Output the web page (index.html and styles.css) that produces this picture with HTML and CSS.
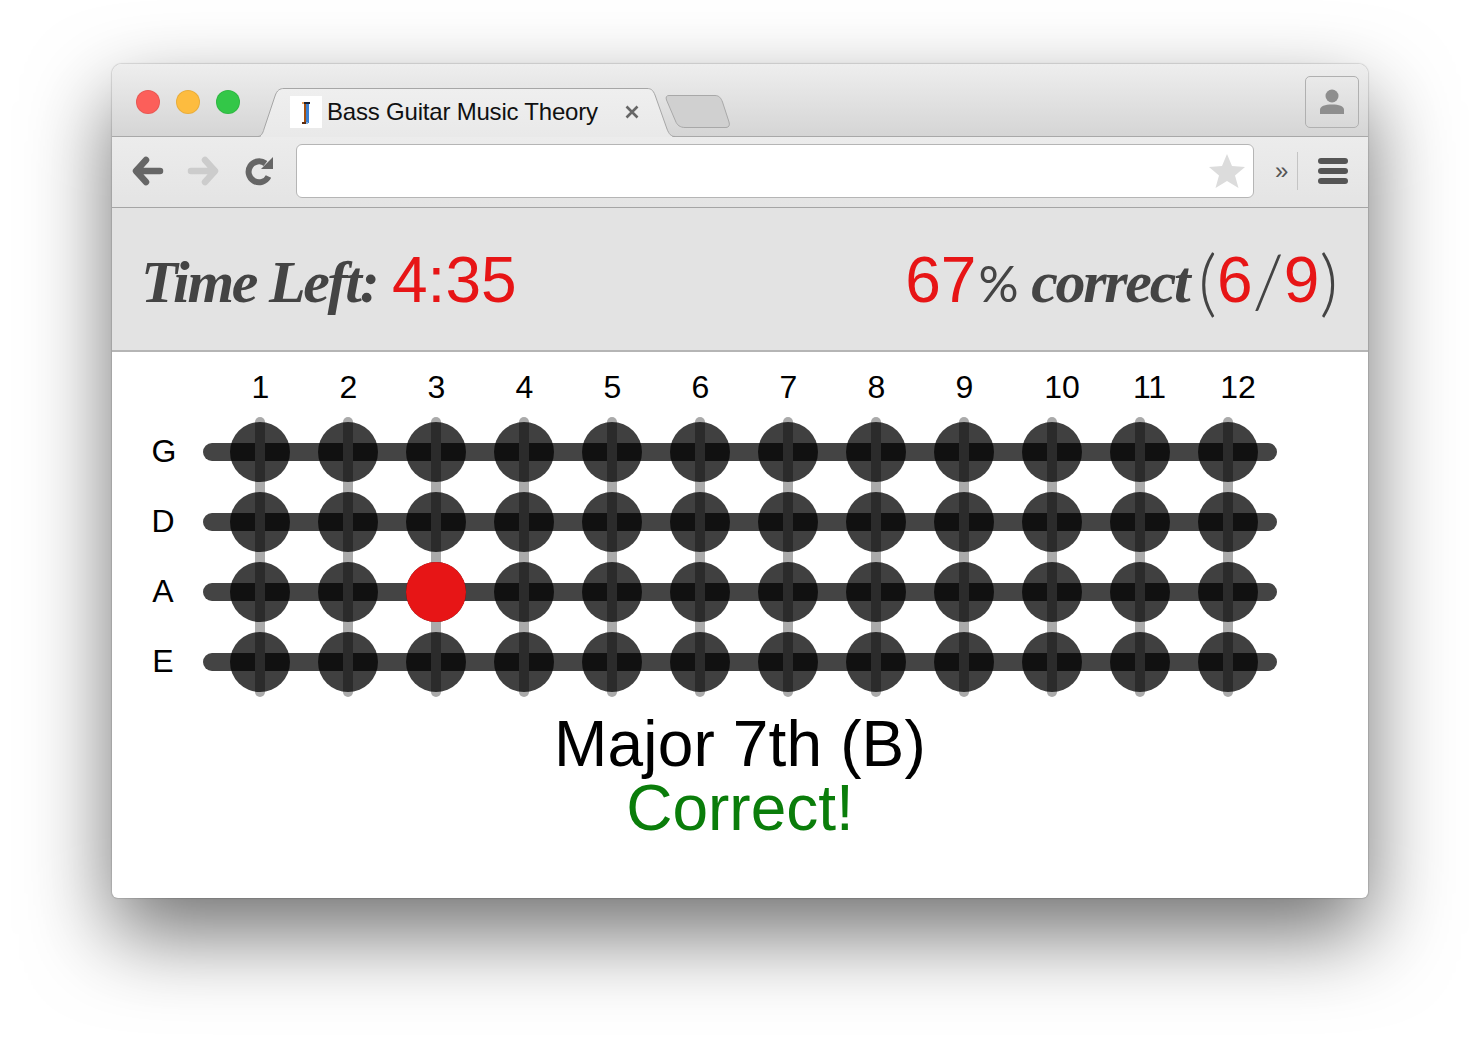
FILE: index.html
```html
<!DOCTYPE html>
<html lang="en">
  <head>
    <meta charset="UTF-8" />
    <title>Bass Guitar Music Theory</title>
    <link rel="stylesheet" href="styles.css">
  </head>
  <body>
    <div class="window">
      <div class="tabstrip">
        <div class="lights">
          <span class="light red"></span>
          <span class="light yellow"></span>
          <span class="light green"></span>
        </div>
        <div class="tab">
          <svg class="tab-shape" width="418" height="49" viewBox="0 0 418 49">
            <defs>
              <linearGradient id="tabFill" x1="0" y1="0" x2="0" y2="1">
                <stop offset="0" stop-color="#efefef" />
                <stop offset="1" stop-color="#e9e9e9" />
              </linearGradient>
            </defs>
            <path fill="url(#tabFill)" stroke="#a6a6a6" d="M0 48.5C3 48.500 5 45 6 41L17 8C19 2 22 .5 26 .5H389C393 .5 395 2 397 7L409 41C411 46 413 48.500 417 48.500" />
            <rect x="3" y="48" width="411" height="1" fill="#e9e9e9" />
          </svg>
          <svg class="favicon" width="32" height="32" viewBox="0 0 32 32">
            <rect width="32" height="32" fill="#fff" />
            <rect x="14" y="8" width="2" height="19" fill="#a5500f" />
            <rect x="16" y="8" width="3" height="19" fill="#3b7fd0" />
            <rect x="12" y="6" width="2" height="2" fill="#e8a060" />
            <rect x="14" y="6" width="6" height="2" fill="#1b2030" />
            <rect x="12" y="26" width="4" height="2" fill="#5a2a10" />
            <rect x="16" y="26" width="2" height="2" fill="#7fb0e0" />
          </svg>
          <span class="tab-title">Bass Guitar Music Theory</span>
          <svg class="tab-close" width="14" height="14" viewBox="0 0 14 14">
            <path d="M1.500 1.500L12.500 12.500M12.500 1.500L1.500 12.500" stroke="#666" stroke-width="2.6" />
          </svg>
        </div>
        <svg class="new-tab" width="66" height="33" viewBox="0 0 66 33">
          <path fill="#d0d0d0" stroke="#a8a8a8" d="M4 .5H50C54 .5 56 3 57.500 7L64 27C65 30 64 32.500 61 32.500H20C15 32.500 12 30 10.500 26L1.500 5C.5 2 1.500 .5 4 .5Z" />
        </svg>
        <div class="profile">
          <svg width="26" height="26" viewBox="0 0 26 26">
            <circle cx="13" cy="7" r="6.500" fill="#8e8e8e" />
            <path d="M1 25V21C1 17 6 15.500 13 15.500S25 17 25 21V25Z" fill="#8e8e8e" />
          </svg>
        </div>
      </div>

      <div class="toolbar">
        <svg class="nav-icon" width="32" height="32" viewBox="0 0 32 32">
          <path d="M14 5L4 16L14 27M5 16H28" fill="none" stroke="#666" stroke-width="6.5" stroke-linecap="round" stroke-linejoin="round" />
        </svg>
        <svg class="nav-icon fwd" width="32" height="32" viewBox="0 0 32 32">
          <path d="M18 5L28 16L18 27M27 16H4" fill="none" stroke="#ccc" stroke-width="6.5" stroke-linecap="round" stroke-linejoin="round" />
        </svg>
        <svg class="nav-icon reload" width="30" height="30" viewBox="0 0 30 30">
          <path d="M20.500 7.500A10.500 10.500 0 1 0 23.500 20.500" fill="none" stroke="#666" stroke-width="6" />
          <path d="M28 1V13H16Z" fill="#666" />
        </svg>
        <div class="omnibox">
          <svg width="36" height="34" viewBox="0 0 36 34">
            <path d="M18 0L23 12L36 13L26 21.500L29.500 34L18 27L6.500 34L10 21.500L0 13L13 12Z" fill="#dcdcdc" />
          </svg>
        </div>
        <span class="more">»</span>
        <span class="separator"></span>
        <div class="menu">
          <span></span>
          <span></span>
          <span></span>
        </div>
      </div>

      <div class="score-bar">
        <div class="score">Time Left: <span class="num timer">4:35</span></div>
        <div class="score"><span class="num">67</span><span class="pct">%</span> correct<span class="punct open">(</span><span class="num">6</span><span class="punct">/</span><span class="num">9</span><span class="punct">)</span></div>
      </div>

      <div class="content">
        <svg class="fretboard" width="1256" height="352" viewBox="112 352 1256 352">
          <defs>
            <g id="dots">
              <circle cx="260" r="30" />
              <circle cx="348" r="30" />
              <circle cx="436" r="30" />
              <circle cx="524" r="30" />
              <circle cx="612" r="30" />
              <circle cx="700" r="30" />
              <circle cx="788" r="30" />
              <circle cx="876" r="30" />
              <circle cx="964" r="30" />
              <circle cx="1052" r="30" />
              <circle cx="1140" r="30" />
              <circle cx="1228" r="30" />
            </g>
          </defs>

          <text class="fret-num" x="260.500" y="398">1</text>
          <text class="fret-num" x="348.500" y="398">2</text>
          <text class="fret-num" x="436.500" y="398">3</text>
          <text class="fret-num" x="524.500" y="398">4</text>
          <text class="fret-num" x="612.500" y="398">5</text>
          <text class="fret-num" x="700.500" y="398">6</text>
          <text class="fret-num" x="788.500" y="398">7</text>
          <text class="fret-num" x="876.500" y="398">8</text>
          <text class="fret-num" x="964.500" y="398">9</text>
          <text class="fret-num" x="1062" y="398">10</text>
          <text class="fret-num" x="1149.500" y="398">11</text>
          <text class="fret-num" x="1238" y="398">12</text>

          <text class="fret-num" x="164" y="462">G</text>
          <text class="fret-num" x="163" y="532">D</text>
          <text class="fret-num" x="163" y="602">A</text>
          <text class="fret-num" x="163" y="672">E</text>

          <g class="strings">
            <rect x="203" y="443" width="1074" height="18" rx="9" />
            <rect x="203" y="513" width="1074" height="18" rx="9" />
            <rect x="203" y="583" width="1074" height="18" rx="9" />
            <rect x="203" y="653" width="1074" height="18" rx="9" />
          </g>
          <g class="frets">
            <rect x="255" y="417" width="10" height="280" rx="5" />
            <rect x="343" y="417" width="10" height="280" rx="5" />
            <rect x="431" y="417" width="10" height="280" rx="5" />
            <rect x="519" y="417" width="10" height="280" rx="5" />
            <rect x="607" y="417" width="10" height="280" rx="5" />
            <rect x="695" y="417" width="10" height="280" rx="5" />
            <rect x="783" y="417" width="10" height="280" rx="5" />
            <rect x="871" y="417" width="10" height="280" rx="5" />
            <rect x="959" y="417" width="10" height="280" rx="5" />
            <rect x="1047" y="417" width="10" height="280" rx="5" />
            <rect x="1135" y="417" width="10" height="280" rx="5" />
            <rect x="1223" y="417" width="10" height="280" rx="5" />
          </g>
          <g class="notes">
            <use href="#dots" y="452" />
            <use href="#dots" y="522" />
            <use href="#dots" y="592" />
            <use href="#dots" y="662" />
          </g>
          <circle class="note-hit" cx="436" cy="592" r="30" />
        </svg>

        <div class="question">Major 7th (B)</div>
        <div class="result">Correct!</div>
      </div>
    </div>
  </body>
</html>
```

FILE: styles.css
```css
html,
body {
  margin: 0;
  height: 1058px;
  overflow: hidden;
  background-color: #fff;
}
body {
  padding: 64px 112px 0;
  box-sizing: border-box;
  font-family: "Liberation Sans", Arial, sans-serif;
}
.window {
  height: 834px;
  border-radius: 10px 10px 6px 6px;
  background: #fff;
  box-shadow: 0 36px 84px 0 rgba(0, 0, 0, 0.56), 0 0 1px 1px rgba(0, 0, 0, 0.12);
  display: flex;
  flex-direction: column;
  overflow: hidden;
}

/* tab strip */
.tabstrip {
  height: 73px;
  box-sizing: border-box;
  flex: none;
  display: flex;
  border-bottom: 1px solid #a8a8a8;
  background: linear-gradient(#eeeeee, #d5d5d5);
}
.lights {
  display: flex;
  gap: 16px;
  padding: 26px 0 0 24px;
}
.light {
  width: 24px;
  height: 24px;
  border-radius: 50%;
  box-sizing: border-box;
  border: 1px solid rgba(0, 0, 0, 0.08);
}
.red {
  background-color: #fc5f5a;
}
.yellow {
  background-color: #fdbc3f;
}
.green {
  background-color: #33c748;
}
.tab {
  position: relative;
  width: 407px;
  height: 49px;
  margin: 24px 0 0 18px;
  display: flex;
  align-items: flex-start;
  flex: none;
}
.tab-shape {
  position: absolute;
  left: 0;
  top: 0;
}
.favicon {
  position: relative;
  margin: 8px 0 0 32px;
  flex: none;
}
.tab-title {
  position: relative;
  margin: 10px 0 0 5px;
  font-size: 24px;
  line-height: 28px;
  letter-spacing: -0.2px;
  color: #111;
  white-space: nowrap;
  width: 272px;
}
.tab-close {
  position: relative;
  margin: 17px 0 0 26px;
}
.new-tab {
  margin: 31px 0 0 0;
  flex: none;
}
.profile {
  margin: 12px 9px 0 auto;
  width: 54px;
  height: 52px;
  box-sizing: border-box;
  border: 1px solid #b0b0b0;
  border-radius: 5px;
  display: flex;
  align-items: center;
  justify-content: center;
}

/* toolbar */
.toolbar {
  height: 71px;
  box-sizing: border-box;
  flex: none;
  display: flex;
  align-items: center;
  padding: 0 20px 2px 20px;
  border-bottom: 1px solid #a5a5a5;
  background: linear-gradient(#ececec, #e4e4e4);
}
.fwd {
  margin-left: 23px;
}
.reload {
  margin-left: 26px;
}
.omnibox {
  width: 958px;
  height: 54px;
  box-sizing: border-box;
  margin-left: 21px;
  border: 1px solid #b5b5b5;
  border-radius: 6px;
  background-color: #fff;
  display: flex;
  align-items: center;
  justify-content: flex-end;
  padding-right: 8px;
}
.more {
  margin-left: 21px;
  width: 17px;
  font-size: 24px;
  line-height: 24px;
  color: #555;
}
.separator {
  width: 1px;
  height: 38px;
  margin-left: 5px;
  background-color: #c4c4c4;
}
.menu {
  margin-left: 20px;
  display: flex;
  flex-direction: column;
  gap: 4px;
}
.menu span {
  display: block;
  width: 30px;
  height: 6px;
  border-radius: 3px;
  background-color: #555;
}

/* score bar */
.score-bar {
  height: 144px;
  box-sizing: border-box;
  flex: none;
  display: flex;
  justify-content: space-between;
  align-items: center;
  padding: 6px 30px 0 29px;
  border-bottom: 2px solid #b5b5b5;
  background-color: #e3e3e3;
}
.score {
  font-family: "Liberation Serif", "Times New Roman", serif;
  font-style: italic;
  font-weight: bold;
  font-size: 60px;
  line-height: 74px;
  letter-spacing: -2.3px;
  color: #444;
  white-space: nowrap;
}
.num {
  font-family: "Liberation Sans", Arial, sans-serif;
  font-style: normal;
  font-weight: normal;
  font-size: 64px;
  line-height: 0;
  letter-spacing: 0;
  color: #e71516;
}
.timer {
  margin-left: 2px;
}
.pct,
.punct {
  font-family: Lato, "Open Sans", sans-serif;
  font-style: normal;
  font-weight: 400;
  line-height: 0;
  letter-spacing: 0;
}
.pct {
  font-size: 50px;
  margin-left: 2px;
}
.punct {
  font-size: 72px;
  font-weight: 300;
  vertical-align: -6px;
}
.open {
  margin-left: 10px;
}

/* fretboard */
.content {
  flex: 1;
  text-align: center;
}
.fretboard {
  display: block;
}
.fret-num {
  font-family: "Liberation Sans", Arial, sans-serif;
  font-size: 32px;
  text-anchor: middle;
  fill: #000;
}
.strings {
  fill: #444;
}
.frets {
  fill: #aaa;
}
.notes {
  fill: #000;
  fill-opacity: 0.75;
}
.note-hit {
  fill: #e71516;
}
.question,
.result {
  font-size: 64px;
  line-height: 64px;
}
.question {
  margin-top: 8px;
  letter-spacing: 0.15px;
  color: #000;
}
.result {
  color: #0a7d0a;
}
```
